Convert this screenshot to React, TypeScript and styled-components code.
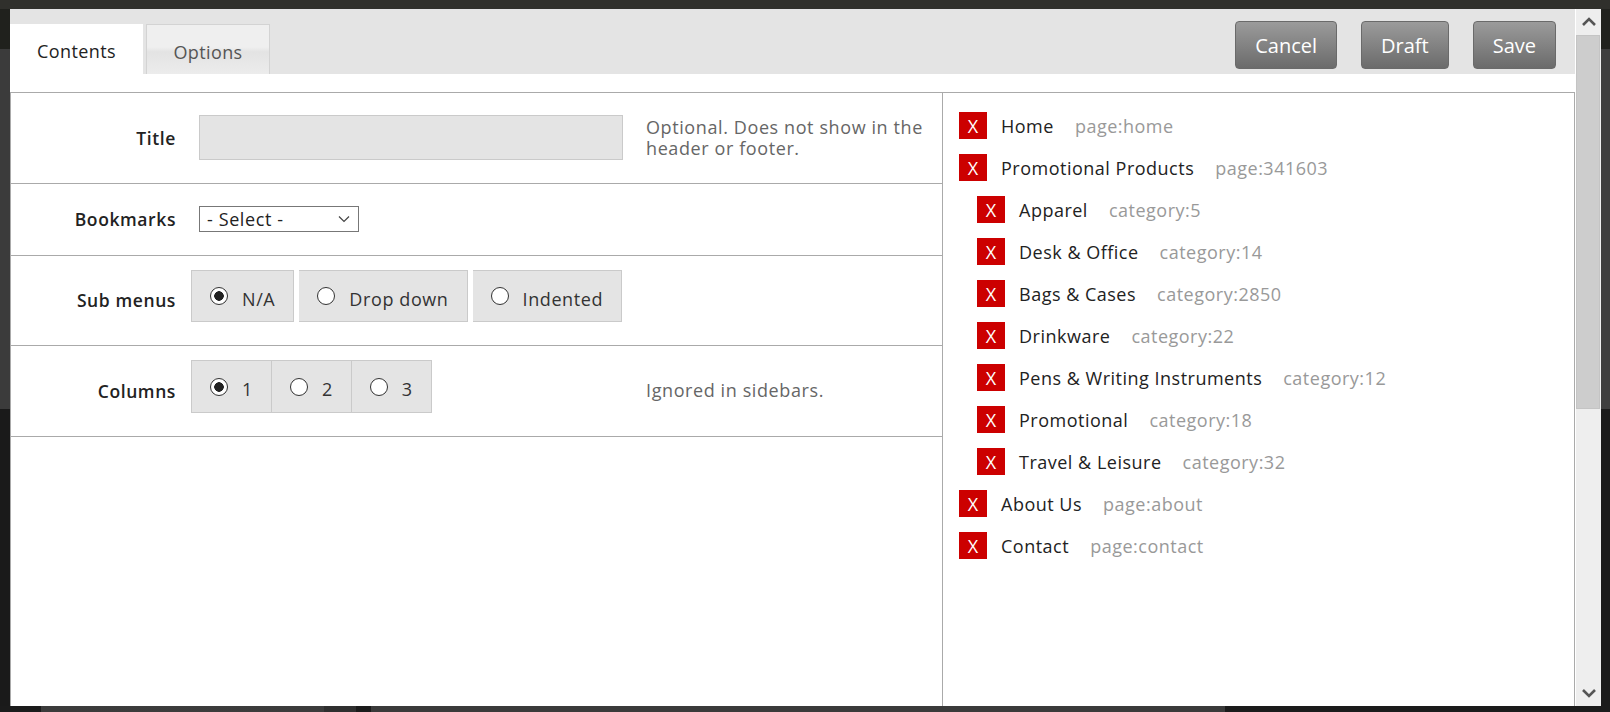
import React from 'react'
import styled, { createGlobalStyle } from 'styled-components'

const GlobalStyle = createGlobalStyle`
	* {
		box-sizing: border-box;
	}
	html,
	body {
		margin: 0;
		padding: 0;
		background: #1b1b1b;
		font-family: 'Open Sans', 'Liberation Sans', sans-serif;
		overflow: hidden;
	}
`

type Link = {
	name: string
	ref: string
	child?: boolean
}

const links: Link[] = [
	{ name: 'Home', ref: 'page:home' },
	{ name: 'Promotional Products', ref: 'page:341603' },
	{ name: 'Apparel', ref: 'category:5', child: true },
	{ name: 'Desk & Office', ref: 'category:14', child: true },
	{ name: 'Bags & Cases', ref: 'category:2850', child: true },
	{ name: 'Drinkware', ref: 'category:22', child: true },
	{ name: 'Pens & Writing Instruments', ref: 'category:12', child: true },
	{ name: 'Promotional', ref: 'category:18', child: true },
	{ name: 'Travel & Leisure', ref: 'category:32', child: true },
	{ name: 'About Us', ref: 'page:about' },
	{ name: 'Contact', ref: 'page:contact' },
]

function Radio(props: { checked?: boolean; label: string; joined?: boolean }) {
	return (
		<RadioBox $joined={props.joined}>
			<RadioDot $checked={props.checked} />
			<RadioText>{props.label}</RadioText>
		</RadioBox>
	)
}

function Chevron(props: { up?: boolean }) {
	return (
		<svg width='14' height='10' viewBox='0 0 14 10'>
			<path
				d={props.up ? 'M1 8 L7 2 L13 8' : 'M1 2 L7 8 L13 2'}
				fill='none'
				stroke='#555'
				strokeWidth='2.6'
			/>
		</svg>
	)
}

export default function App() {
	return (
		<>
			<GlobalStyle />
			<Backdrop>
				<TopStrip />
				<LeftStrip />
				<Dialog>
					<Main>
						<Header>
							<Tabs>
								<Tab $active>Contents</Tab>
								<Tab>Options</Tab>
							</Tabs>
							<Actions>
								<ActionButton>Cancel</ActionButton>
								<ActionButton>Draft</ActionButton>
								<ActionButton>Save</ActionButton>
							</Actions>
						</Header>
						<Body>
							<Panels>
								<FormPane>
									<FormRow>
										<Label>Title</Label>
										<TextInput />
										<Help>Optional. Does not show in the header or footer.</Help>
									</FormRow>
									<FormRow>
										<Label>Bookmarks</Label>
										<Select>
											<span>- Select -</span>
											<svg width='12' height='8' viewBox='0 0 12 8'>
												<path d='M1 1.5 L6 6.5 L11 1.5' fill='none' stroke='#444' strokeWidth='1.2' />
											</svg>
										</Select>
									</FormRow>
									<FormRow>
										<Label>Sub menus</Label>
										<RadioGroup>
											<Radio checked label='N/A' />
											<Radio label='Drop down' />
											<Radio label='Indented' />
										</RadioGroup>
									</FormRow>
									<FormRow>
										<Label>Columns</Label>
										<RadioGroup $joined>
											<Radio checked label='1' joined />
											<Radio label='2' joined />
											<Radio label='3' joined />
										</RadioGroup>
										<Help>Ignored in sidebars.</Help>
									</FormRow>
								</FormPane>
								<LinkPane>
									{links.map((link) => (
										<LinkItem key={link.name} $child={link.child}>
											<RemoveButton>X</RemoveButton>
											<LinkName>{link.name}</LinkName>
											<LinkRef>{link.ref}</LinkRef>
										</LinkItem>
									))}
								</LinkPane>
							</Panels>
						</Body>
					</Main>
					<Scrollbar>
						<ScrollArrow>
							<Chevron up />
						</ScrollArrow>
						<ScrollThumb />
						<ScrollTrack />
						<ScrollArrow>
							<Chevron />
						</ScrollArrow>
					</Scrollbar>
				</Dialog>
				<RightStrip />
				<BottomStrip />
			</Backdrop>
		</>
	)
}

const Backdrop = styled.div`
	width: 1610px;
	height: 712px;
	display: grid;
	grid-template-columns: 10px 1591px 9px;
	grid-template-rows: 9px 697px 6px;
`
const TopStrip = styled.div`
	grid-column: 1 / 4;
	background: #30302c;
`
const LeftStrip = styled.div`
	background: linear-gradient(
		#20211d 0,
		#20211d 40px,
		#3b3b3b 40px,
		#3b3b3b 400px,
		#1a1a1a 400px
	);
`
const RightStrip = styled.div`
	background: linear-gradient(
		#21221e 0,
		#21221e 40px,
		#3e3e3e 40px,
		#3e3e3e 400px,
		#1b1b1b 400px
	);
`
const BottomStrip = styled.div`
	grid-column: 1 / 4;
	background: linear-gradient(
		90deg,
		#1b1b1b 0,
		#1b1b1b 41px,
		#3b3b3b 41px,
		#3c3c3c 324px,
		#2f2f2f 324px,
		#2f2f2f 356px,
		#1b1b1b 356px,
		#1b1b1b 371px,
		#3a3a3a 371px,
		#3a3a3a 1225px,
		#1b1b1b 1225px
	);
`
const Dialog = styled.div`
	display: flex;
	background: #fff;
	overflow: hidden;
`
const Main = styled.div`
	flex: 1;
	display: flex;
	flex-direction: column;
	min-width: 0;
`
const Header = styled.div`
	height: 65px;
	flex-shrink: 0;
	background: #e4e4e4;
	display: flex;
	justify-content: space-between;
	align-items: flex-start;
`
const Tabs = styled.div`
	display: flex;
	align-self: flex-end;
	gap: 3px;
`
const Tab = styled.div<{ $active?: boolean }>`
	height: 50px;
	width: ${(p) => (p.$active ? '133px' : '124px')};
	display: flex;
	align-items: center;
	justify-content: center;
	padding-top: 4px;
	font-size: 18px;
	letter-spacing: 0.4px;
	color: ${(p) => (p.$active ? '#222' : '#555')};
	background: ${(p) => (p.$active ? '#fff' : 'linear-gradient(#efefef, #efefef 45%, #e3e3e3 55%, #ececec)')};
	border: ${(p) => (p.$active ? 'none' : '1px solid #d3d3d3')};
	border-bottom: none;
`
const Actions = styled.div`
	display: flex;
	gap: 24px;
	padding: 12px 19px 0 0;
`
const ActionButton = styled.button`
	height: 48px;
	padding: 0 19px;
	border: 1px solid #6a6a6a;
	border-radius: 4px;
	background: linear-gradient(#9b9b9b, #6b6b6b);
	color: #fff;
	font-family: 'Open Sans', 'Liberation Sans', sans-serif;
	font-size: 20px;
	cursor: pointer;
`
const Body = styled.div`
	flex: 1;
	padding-top: 18px;
	display: flex;
	flex-direction: column;
	min-height: 0;
`
const Panels = styled.div`
	flex: 1;
	display: flex;
	border: 1px solid #aaa;
	border-bottom: none;
`
const FormPane = styled.div`
	width: 932px;
	border-right: 1px solid #aaa;
`
const FormRow = styled.div`
	display: grid;
	grid-template-columns: 165px 424px 1fr;
	column-gap: 23px;
	align-items: center;
	padding: 22px 12px 23px 0;
	border-bottom: 1px solid #aaa;
`
const Label = styled.div`
	text-align: right;
	font-size: 17.5px;
	font-weight: 600;
	letter-spacing: 0.6px;
	color: #222;
`
const TextInput = styled.div`
	height: 45px;
	background: #e4e4e4;
	border: 1px solid #cacaca;
`
const Help = styled.div`
	grid-column: 3;
	font-size: 18px;
	line-height: 21px;
	letter-spacing: 0.6px;
	color: #666;
`
const Select = styled.div`
	width: 160px;
	height: 26px;
	border: 1px solid #777;
	display: flex;
	align-items: center;
	justify-content: space-between;
	padding: 0 8px 0 7px;
	font-size: 18px;
	letter-spacing: 0.6px;
	color: #222;
`
const RadioGroup = styled.div<{ $joined?: boolean }>`
	display: flex;
	gap: ${(p) => (p.$joined ? '0' : '5px')};
	margin: -8px 0 0 -8px;
	justify-self: start;
	white-space: nowrap;
`
const RadioBox = styled.div<{ $joined?: boolean }>`
	height: ${(p) => (p.$joined ? '53px' : '52px')};
	display: flex;
	align-items: center;
	gap: 14px;
	padding: 0 ${(p) => (p.$joined ? '18px' : '18px')} 0 18px;
	background: #e4e4e4;
	border: 1px solid #cacaca;
	& + & {
		border-left: ${(p) => (p.$joined ? 'none' : '1px solid #cacaca')};
	}
	font-size: 18px;
	letter-spacing: 0.6px;
	color: #333;
	flex-shrink: 0;
`
const RadioText = styled.span`
	padding-top: 5px;
`
const RadioDot = styled.span<{ $checked?: boolean }>`
	width: 18px;
	height: 18px;
	border-radius: 50%;
	border: 1px solid #333;
	background: ${(p) => (p.$checked ? 'radial-gradient(circle, #222 0, #222 4.5px, #fff 5px)' : '#fff')};
	flex-shrink: 0;
`
const LinkPane = styled.div`
	flex: 1;
	padding: 19px 16px;
`
const LinkItem = styled.div<{ $child?: boolean }>`
	display: flex;
	align-items: center;
	gap: 14px;
	height: 27px;
	margin: 0 0 15px ${(p) => (p.$child ? '18px' : '0')};
`
const RemoveButton = styled.div`
	width: 28px;
	height: 27px;
	background: #cc0000;
	color: #fff;
	display: flex;
	align-items: center;
	justify-content: center;
	font-size: 18px;
`
const LinkName = styled.span`
	font-size: 18px;
	letter-spacing: 0.5px;
	color: #222;
`
const LinkRef = styled.span`
	margin-left: 7px;
	font-size: 18px;
	letter-spacing: 0.5px;
	color: #999;
`
const Scrollbar = styled.div`
	width: 26px;
	display: flex;
	flex-direction: column;
	background: #eee;
	border-left: 1px solid #fff;
`
const ScrollArrow = styled.div`
	height: 26px;
	display: flex;
	align-items: center;
	justify-content: center;
	flex-shrink: 0;
`
const ScrollThumb = styled.div`
	height: 374px;
	margin-right: 1px;
	background: #cdcdcd;
	border: 1px solid #c4c4c4;
`
const ScrollTrack = styled.div`
	flex: 1;
`
